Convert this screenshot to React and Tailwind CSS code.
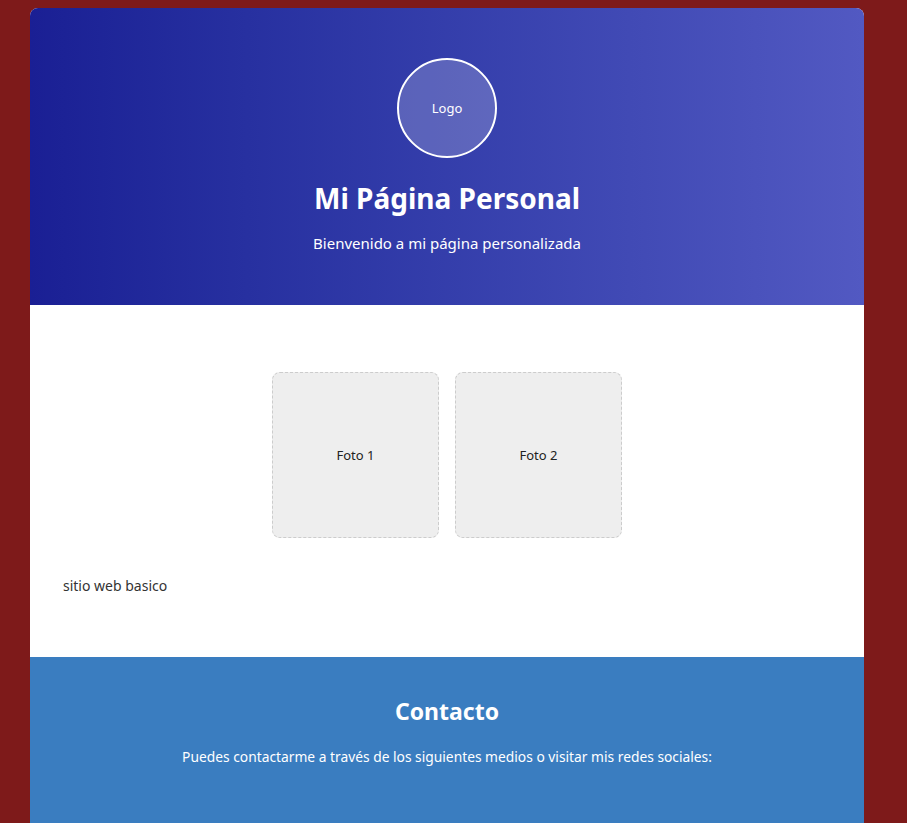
export default function App() {
  return (
    <div className="min-h-screen bg-[#7e1a1a] pt-2 font-['Noto_Sans',sans-serif]">
      <div className="ml-[30px] w-[834px] overflow-hidden rounded-t-lg bg-white">
        <header className="flex h-[297px] flex-col items-center bg-linear-to-r from-[#1a1f94] to-[#5259c2] pt-[50px] text-white">
          <div className="flex h-[100px] w-[100px] items-center justify-center rounded-full border-2 border-white bg-white/20 pt-px text-[13px]">
            Logo
          </div>
          <h1 className="mt-[22px] text-[28px] font-bold leading-[36px]">Mi Página Personal</h1>
          <p className="mt-[17px] text-[15px] leading-[20px]">Bienvenido a mi página personalizada</p>
        </header>

        <main className="h-[352px] px-[33px] pt-[67px]">
          <div className="flex justify-center gap-4">
            <div className="flex h-[166px] w-[167px] items-center justify-center rounded-lg border border-dashed border-[#cccccc] bg-[#eeeeee] pt-px text-[13px] text-[#222]">
              Foto 1
            </div>
            <div className="flex h-[166px] w-[167px] items-center justify-center rounded-lg border border-dashed border-[#cccccc] bg-[#eeeeee] pt-px text-[13px] text-[#222]">
              Foto 2
            </div>
          </div>
          <p className="mt-[38px] text-[14px] leading-[20px] text-[#333]">sitio web basico</p>
        </main>

        <section className="flex h-[180px] flex-col items-center bg-[#3a7dc0] pt-[38px] text-white">
          <h2 className="text-[23px] font-bold leading-[32px]">Contacto</h2>
          <p className="mt-[20px] text-[13.8px] leading-[20px]">
            Puedes contactarme a través de los siguientes medios o visitar mis redes sociales:
          </p>
        </section>
      </div>
    </div>
  );
}
